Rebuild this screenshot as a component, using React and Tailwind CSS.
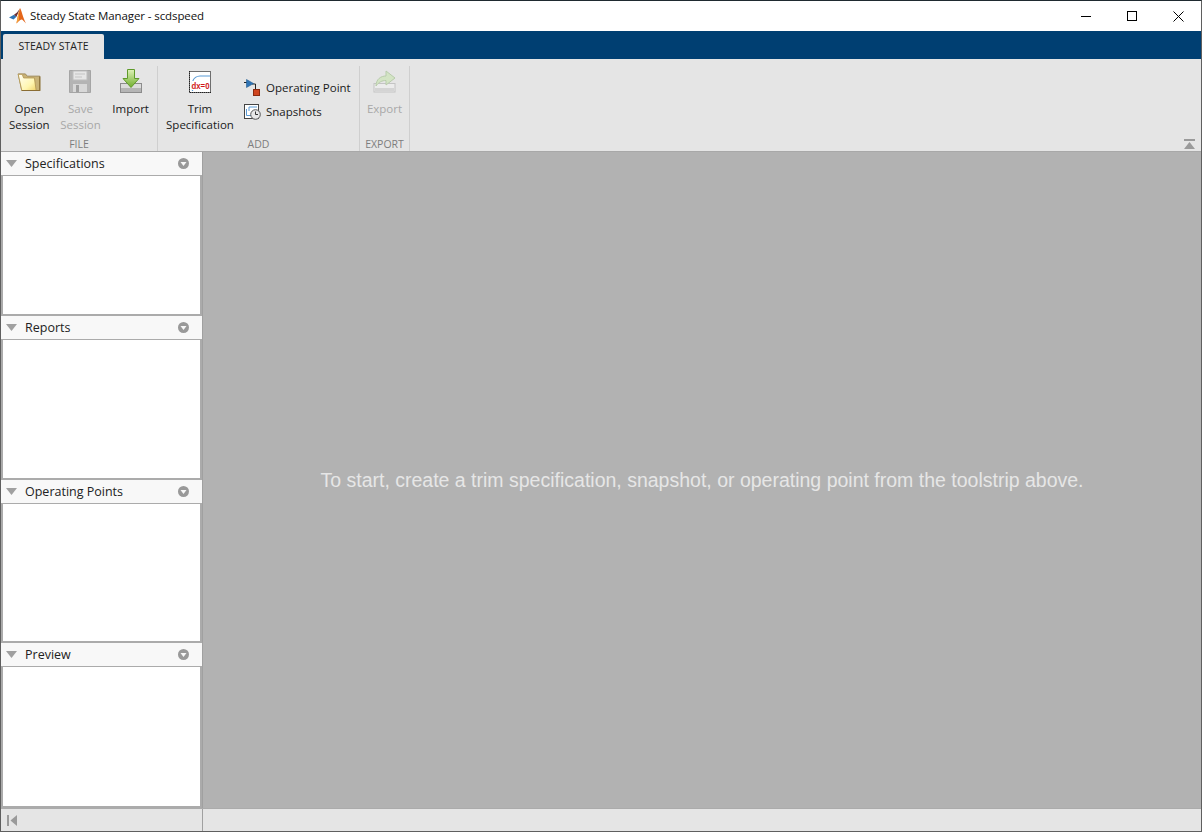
const FONT = 'font-["Open_Sans","Noto_Sans",sans-serif]'

function MatlabLogo() {
  return (
    <svg width="17" height="16" viewBox="0 0 17 16">
      <path d="M0 9.5 L5 6.8 L7.5 8.8 L4.5 11.5 Z" fill="#2f74b5" />
      <path d="M5 6.8 L8 4.5 L11 0.5 L7.5 8.8 Z" fill="#6b2f2f" />
      <path d="M11 0 C12.5 2 14 10 17 15.5 C15 13.5 13.5 11.5 12.5 11.5 C11 11.5 9 14 7.5 15.5 C8 12 9 6 11 0 Z" fill="#e4661a" />
      <path d="M11 0 C10 4 9.6 8 10 12 L7.5 15.5 C8 12 9 6 11 0 Z" fill="#f4a63c" />
    </svg>
  )
}

function FolderIcon() {
  return (
    <svg className="mb-[2px]" width="24" height="18" viewBox="0 0 26 20">
      <defs>
        <linearGradient id="fold" x1="0" y1="0" x2="1" y2="1">
          <stop offset="0" stopColor="#fffef6" />
          <stop offset="0.65" stopColor="#fff6b0" />
          <stop offset="1" stopColor="#efd26a" />
        </linearGradient>
      </defs>
      <path d="M1 1 H9 L11 3.5 H25 V19.5 H5 Z" fill="#c9b377" stroke="#9a8350" />
      <path d="M1 1.5 L5 19.5 H21 L19 5.5 H7 L5.5 1.5 Z" fill="url(#fold)" stroke="#b59a55" />
      <path d="M5 19.5 H25 V4" fill="none" stroke="#8a6d34" strokeWidth="1.2" />
    </svg>
  )
}

function SaveIcon() {
  return (
    <svg width="22" height="23" viewBox="0 0 22 23">
      <path d="M0.5 0.5 H21.5 V22.5 H0.5 Z" fill="#b4b4b4" stroke="#a5a5a5" />
      <rect x="4" y="1" width="14" height="9" fill="#e6e6e6" stroke="#bdbdbd" />
      <path d="M6 4 H16 M6 7 H13" stroke="#c4c4c4" />
      <rect x="4" y="14" width="14" height="8" fill="#d8d8d8" />
      <rect x="7" y="15" width="3" height="7" fill="#a0a0a0" />
    </svg>
  )
}

function ImportIcon() {
  return (
    <svg width="22" height="24" viewBox="0 0 22 24">
      <defs>
        <linearGradient id="arr" x1="0" y1="0" x2="0" y2="1">
          <stop offset="0" stopColor="#dff2b8" />
          <stop offset="1" stopColor="#6fae2c" />
        </linearGradient>
      </defs>
      <rect x="0.5" y="14.5" width="21" height="9" fill="#dcdcdc" stroke="#8c8c8c" />
      <rect x="1" y="19" width="20" height="4" fill="#b5b5b5" />
      <path d="M7.5 0.5 H14.5 V9.5 H19 L11 18.5 L3 9.5 H7.5 Z" fill="url(#arr)" stroke="#5f9a2a" />
    </svg>
  )
}

function TrimIcon() {
  return (
    <svg width="22" height="22" viewBox="0 0 22 22">
      <rect x="0.5" y="0.5" width="21" height="21" fill="#fff" stroke="#6e6e6e" />
      <path d="M0.5 0 V21.5 H22" fill="none" stroke="#222" strokeDasharray="1 1" />
      <path d="M3.5 20 V11 C4.5 7 8 5 11 5 H21" fill="none" stroke="#5b9bd5" strokeWidth="1.2" />
      <rect x="3" y="10" width="17.5" height="9" fill="#fff" />
      <text x="2.5" y="18" fontSize="9" fontWeight="700" fill="#d01818" textLength="18" lengthAdjust="spacingAndGlyphs" fontFamily="Liberation Sans, sans-serif">dx=0</text>
    </svg>
  )
}

function OperatingPointIcon() {
  return (
    <svg width="17" height="17" viewBox="0 0 17 17">
      <path d="M0 3.5 H3 M8 5 H11.5 V10" fill="none" stroke="#222" />
      <path d="M2.5 0.5 L9.5 4.5 L2.5 8.5 Z" fill="#2f74b5" stroke="#1f5a90" strokeWidth="0.6" />
      <rect x="9.5" y="10.5" width="6" height="6" fill="#d0451f" stroke="#8a2a10" />
    </svg>
  )
}

function SnapshotsIcon() {
  return (
    <svg width="17" height="16" viewBox="0 0 17 16">
      <rect x="0.5" y="0.5" width="14" height="14" fill="#fff" stroke="#444" />
      <path d="M2.5 11.5 H9 M2.5 11.5 V5 M5 7 V3 H13" fill="none" stroke="#5b9bd5" />
      <circle cx="11.5" cy="10.5" r="4.8" fill="#e8e8e8" stroke="#555" />
      <path d="M11.5 7.5 V10.5 H14" fill="none" stroke="#333" />
    </svg>
  )
}

function ExportIcon() {
  return (
    <svg width="24" height="24" viewBox="0 0 24 24">
      <rect x="1" y="14.5" width="21" height="8.5" fill="#ececec" stroke="#c4c4c4" />
      <rect x="2" y="19" width="19" height="3.5" fill="#d4d4d4" />
      <path d="M3 17 C3 10 8 7 13 7 V2 L22 9 L13 16 V11.5 C9 11.5 6 13 3 17 Z" fill="#d3e4c4" stroke="#b8ccab" />
    </svg>
  )
}

function BigButton({ icon, lines, disabled, className }) {
  return (
    <div className={`flex flex-col items-center ${className}`}>
      <div className="h-[27px] flex items-end justify-center">{icon}</div>
      <div className={`mt-[8px] text-[11.5px] leading-[16px] text-center ${disabled ? 'text-[#a8a8a8]' : 'text-[#1a1a1a]'}`}>
        {lines.map((l) => <div key={l}>{l}</div>)}
      </div>
    </div>
  )
}

function Section({ label, width, children }) {
  return (
    <div className="flex flex-col h-full shrink-0 border-r border-[#cfcfcf]" style={{ width }}>
      <div className="flex-1 min-h-0">{children}</div>
      <div className="h-[14px] text-[10.5px] leading-[14px] text-center text-[#7d7d7d]">{label}</div>
    </div>
  )
}

function Panel({ title, heightClass }) {
  return (
    <div className="flex flex-col">
      <div className="h-[24px] bg-[#f8f8f8] border-b border-[#ababab] flex items-center pl-[5px] pr-[13px] shrink-0">
        <svg width="11" height="7" viewBox="0 0 11 7"><path d="M0 0 H11 L5.5 7 Z" fill="#a0a0a0" /></svg>
        <span className="ml-[8px] pt-[1px] text-[12.5px] text-[#222] flex-1">{title}</span>
        <svg width="11" height="11" viewBox="0 0 11 11">
          <circle cx="5.5" cy="5.5" r="5.5" fill="#999999" />
          <path d="M2.5 4 H8.5 L5.5 8 Z" fill="#f8f8f8" />
        </svg>
      </div>
      <div className={`${heightClass} bg-white border-x-2 border-b-2 border-x-[#ababab] border-b-[#ababab]`} />
    </div>
  )
}

export default function App() {
  return (
    <div className={`w-[1202px] h-[832px] flex flex-col overflow-hidden bg-[#e5e5e5] border-l border-t border-r border-b border-[#5f5f5f] border-t-[#1f2a30] ${FONT}`}>
      {/* title bar */}
      <div className="h-[30px] bg-white flex items-center shrink-0">
        <div className="ml-[8px]"><MatlabLogo /></div>
        <span className="ml-[4px] text-[11.5px] tracking-[-0.1px] text-[#111]">Steady State Manager - scdspeed</span>
        <div className="ml-auto flex items-center h-full">
          <div className="w-[46px] flex justify-center">
            <div className="w-[10px] h-px bg-black" />
          </div>
          <div className="w-[46px] flex justify-center">
            <div className="w-[10px] h-[10px] border border-black" />
          </div>
          <div className="w-[46px] flex justify-center">
            <svg width="11" height="11" viewBox="0 0 11 11"><path d="M0.5 0.5 L10.5 10.5 M10.5 0.5 L0.5 10.5" stroke="#000" /></svg>
          </div>
        </div>
      </div>

      {/* tab strip */}
      <div className="h-[28px] bg-[#003f72] flex items-end pl-[2px] shrink-0">
        <div className="w-[101px] h-[25px] bg-[#e5e5e5] rounded-t-[2px] text-[10.5px] text-[#222] flex items-center justify-center">STEADY STATE</div>
      </div>

      {/* toolstrip */}
      <div className="h-[93px] bg-[#e5e5e5] border-b border-[#a8a8a8] flex items-stretch pt-[7px] shrink-0 relative">
        <Section label="FILE" width={157}>
          <div className="flex">
            <BigButton className="w-[55px] ml-[1px]" icon={<FolderIcon />} lines={['Open', 'Session']} />
            <BigButton className="w-[48px]" icon={<SaveIcon />} lines={['Save', 'Session']} disabled />
            <BigButton className="w-[53px]" icon={<ImportIcon />} lines={['Import']} />
          </div>
        </Section>
        <Section label="ADD" width={202}>
          <div className="flex">
            <BigButton className="w-[84px] mr-[2px]" icon={<TrimIcon />} lines={['Trim', 'Specification']} />
            <div className="flex flex-col gap-[8px] pt-[13px] text-[11.5px] leading-[16px] text-[#1a1a1a]">
              <div className="flex items-center gap-[5px]"><OperatingPointIcon />Operating Point</div>
              <div className="flex items-center gap-[5px]"><SnapshotsIcon />Snapshots</div>
            </div>
          </div>
        </Section>
        <Section label="EXPORT" width={50}>
          <BigButton className="w-full" icon={<ExportIcon />} lines={['Export']} disabled />
        </Section>
        <svg className="absolute right-[6px] bottom-[2px]" width="11" height="10" viewBox="0 0 11 10">
          <rect x="0" y="0" width="11" height="2" fill="#9a9a9a" />
          <path d="M5.5 3 L11 10 H0 Z" fill="#9a9a9a" />
        </svg>
      </div>

      {/* main */}
      <div className="flex-1 min-h-0 flex">
        <div className="w-[201px] shrink-0 flex flex-col">
          <Panel title="Specifications" heightClass="h-[140px]" />
          <Panel title="Reports" heightClass="h-[140px]" />
          <Panel title="Operating Points" heightClass="h-[139px]" />
          <Panel title="Preview" heightClass="h-[141px]" />
        </div>
        <div className="flex-1 bg-[#b2b2b2] border-l border-[#a0a0a0] flex items-center justify-center pt-[2px] font-['Liberation_Sans',sans-serif] text-[19.5px] text-[#e6e6e6]">
          To start, create a trim specification, snapshot, or operating point from the toolstrip above.
        </div>
      </div>

      {/* status bar */}
      <div className="h-[23px] shrink-0 bg-[#e5e5e5] border-t border-[#ababab] flex">
        <div className="w-[201px] flex items-center pl-[6px]">
          <svg width="11" height="11" viewBox="0 0 11 11">
            <rect x="0" y="0" width="2" height="11" fill="#9a9a9a" />
            <path d="M3.5 5.5 L10 0 V11 Z" fill="#9a9a9a" />
          </svg>
        </div>
        <div className="flex-1 border-l border-[#a0a0a0]" />
      </div>
    </div>
  )
}
